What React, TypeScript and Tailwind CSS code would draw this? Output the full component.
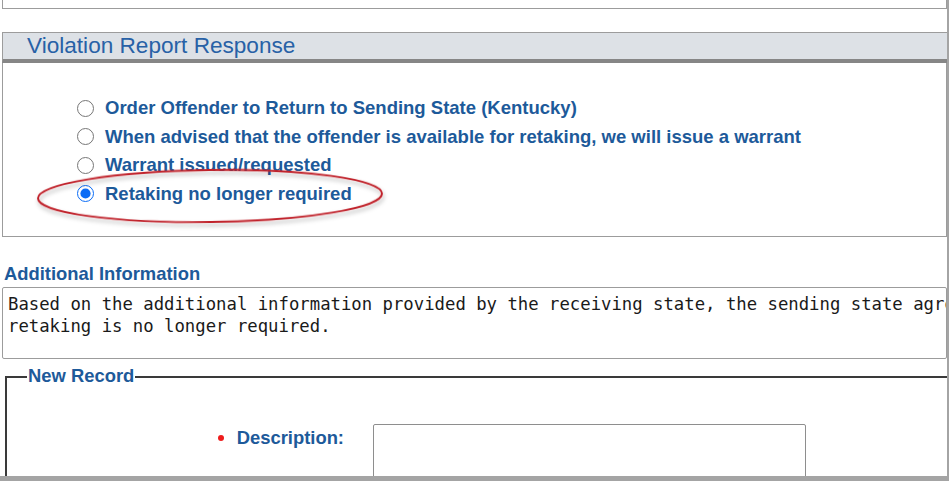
export default function App() {
  const options = [
    { label: "Order Offender to Return to Sending State (Kentucky)", checked: false },
    { label: "When advised that the offender is available for retaking, we will issue a warrant", checked: false },
    { label: "Warrant issued/requested", checked: false },
    { label: "Retaking no longer required", checked: true },
  ];

  return (
    <div className="relative w-[949px] h-[481px] overflow-hidden bg-white border-r-[2px] border-b-[5px] border-[#a4a4a4] font-['Liberation_Sans',Arial,sans-serif]">
      {/* previous section tail */}
      <div className="ml-[2px] h-[9px] border-x border-b border-[#9c9c9c]"></div>

      {/* Violation Report Response */}
      <div className="mt-[23px] ml-[2px]">
        <div className="h-[31px] bg-[#dde1e6] border-t border-l border-[#9c9c9c] border-b-[4px] border-b-[#868686] pl-[24px] flex items-center">
          <span className="text-[22.6px] leading-none text-[#2861a6]">Violation Report Response</span>
        </div>
        <div className="h-[174px] border-x border-b border-[#9c9c9c] pt-[31px] pl-[74px]">
          {options.map((opt) => (
            <label key={opt.label} className="flex items-center h-[28.5px]">
              <input
                type="radio"
                name="response"
                defaultChecked={opt.checked}
                className="w-[17px] h-[17px] m-0 accent-[#0b6cf5]"
              />
              <span className="ml-[11px] text-[18.5px] font-bold text-[#1d5a9a] leading-none">{opt.label}</span>
            </label>
          ))}
        </div>
      </div>

      {/* Additional Information */}
      <div className="mt-[28px] ml-[4px] text-[18.4px] font-bold text-[#1d5a9a] leading-none">Additional Information</div>
      <div className="mt-[4px] ml-[2px] h-[72px] border border-[#9c9c9c] rounded-[2px] pl-[5px] pt-[5px] overflow-hidden font-['DejaVu_Sans_Mono',monospace] text-[17.3px] leading-[22px] text-[#1a1a1a]">
        <div className="whitespace-nowrap">Based on the additional information provided by the receiving state, the sending state agrees that</div>
        <div className="whitespace-nowrap">retaking is no longer required.</div>
      </div>

      {/* New Record */}
      <fieldset className="mt-[8px] ml-[5px] h-[120px] border-t-2 border-l-2 border-[#3a3a3a] px-0">
        <legend className="ml-[20px] px-[1px] text-[18.4px] font-bold text-[#1d5a9a] leading-none">New Record</legend>
        <div className="flex items-start mt-[38px]">
          <div className="w-[366px] flex items-center justify-end pt-[5px] pr-[29px]">
            <span className="w-[6px] h-[6px] rounded-full bg-[#ee1c1c] mr-[13px]"></span>
            <span className="text-[18.4px] font-bold text-[#1d5a9a] leading-none">Description:</span>
          </div>
          <div className="w-[433px] h-[60px] border border-[#8e8e8e] rounded-[2px]"></div>
        </div>
      </fieldset>

      {/* annotation circle */}
      <svg className="absolute left-[34px] top-[165px] pointer-events-none" width="360" height="66" viewBox="0 0 360 66">
        <defs>
          <filter id="sh" x="-10%" y="-30%" width="120%" height="160%">
            <feDropShadow dx="1" dy="3" stdDeviation="2" floodColor="#000" floodOpacity="0.3" />
          </filter>
        </defs>
        <ellipse cx="176" cy="31" rx="172" ry="26" fill="none" stroke="#c0222b" strokeWidth="2" filter="url(#sh)" transform="rotate(-0.8 176 31)" />
      </svg>
    </div>
  );
}
